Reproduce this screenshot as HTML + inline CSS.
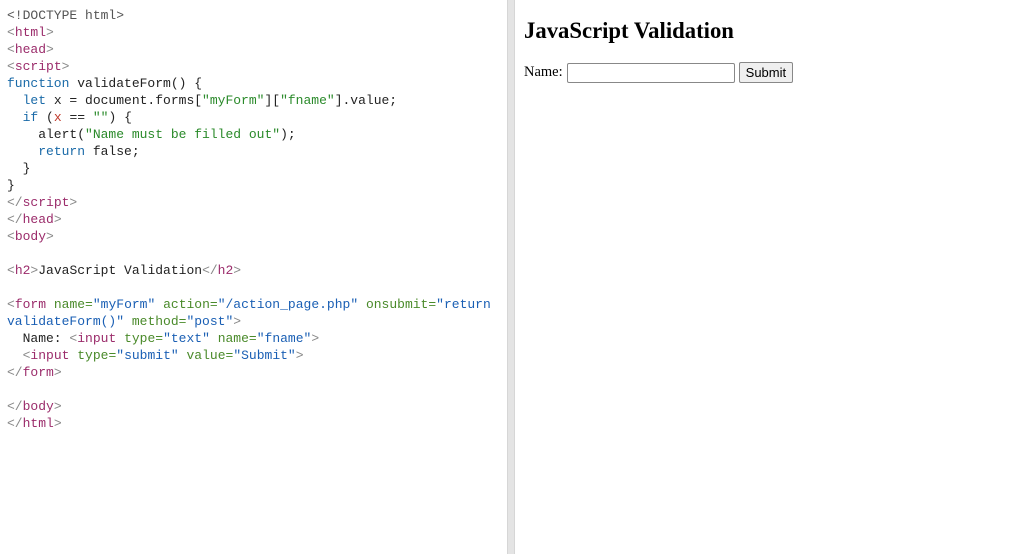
<!DOCTYPE html>
<html><head><style>
body{margin:0;width:1024px;height:554px;background:#fff;position:relative;overflow:hidden}
pre{position:absolute;left:7px;top:7px;margin:0;font-family:"Liberation Mono",monospace;font-size:13px;line-height:17px;color:#222}
.d{color:#555}.b{color:#888}.t{color:#9b2c6b}.k{color:#1a6aa8}.s{color:#2a8a2a}.a{color:#4a8a2a}.v{color:#1a5fb4}.r{color:#c0392b}
.div{position:absolute;left:507px;top:0;width:8px;height:554px;background:#e4e4e4;border-left:1px solid #d6d6d6;border-right:1px solid #d6d6d6;box-sizing:border-box}
.right{position:absolute;left:524px;top:0;font-family:"Liberation Serif",serif;color:#000}
h2{font-size:22.7px;margin:18px 0 0;font-weight:bold}
.f{position:absolute;top:62px;left:0;white-space:nowrap;font-size:14.5px;display:flex;align-items:center}
.in{width:166px;height:18px;border:1px solid #888;border-radius:2px;margin-left:4px}
.btn{margin-left:4px;font-family:"Liberation Sans",sans-serif;font-size:13px;padding:1px 6px;border:1px solid #888;background:#efefef;border-radius:2px;height:17px;line-height:17px}
</style></head><body>
<pre><span class="d">&lt;!DOCTYPE html&gt;</span>
<span class="b">&lt;</span><span class="t">html</span><span class="b">&gt;</span>
<span class="b">&lt;</span><span class="t">head</span><span class="b">&gt;</span>
<span class="b">&lt;</span><span class="t">script</span><span class="b">&gt;</span>
<span class="k">function</span> validateForm() {
  <span class="k">let</span> x = document.forms[<span class="s">"myForm"</span>][<span class="s">"fname"</span>].value;
  <span class="k">if</span> (<span class="r">x</span> == <span class="s">""</span>) {
    alert(<span class="s">"Name must be filled out"</span>);
    <span class="k">return</span> false;
  }
}
<span class="b">&lt;/</span><span class="t">script</span><span class="b">&gt;</span>
<span class="b">&lt;/</span><span class="t">head</span><span class="b">&gt;</span>
<span class="b">&lt;</span><span class="t">body</span><span class="b">&gt;</span>

<span class="b">&lt;</span><span class="t">h2</span><span class="b">&gt;</span>JavaScript Validation<span class="b">&lt;/</span><span class="t">h2</span><span class="b">&gt;</span>

<span class="b">&lt;</span><span class="t">form</span> <span class="a">name=</span><span class="v">"myForm"</span> <span class="a">action=</span><span class="v">"/action_page.php"</span> <span class="a">onsubmit=</span><span class="v">"return</span>
<span class="v">validateForm()"</span> <span class="a">method=</span><span class="v">"post"</span><span class="b">&gt;</span>
  Name: <span class="b">&lt;</span><span class="t">input</span> <span class="a">type=</span><span class="v">"text"</span> <span class="a">name=</span><span class="v">"fname"</span><span class="b">&gt;</span>
  <span class="b">&lt;</span><span class="t">input</span> <span class="a">type=</span><span class="v">"submit"</span> <span class="a">value=</span><span class="v">"Submit"</span><span class="b">&gt;</span>
<span class="b">&lt;/</span><span class="t">form</span><span class="b">&gt;</span>

<span class="b">&lt;/</span><span class="t">body</span><span class="b">&gt;</span>
<span class="b">&lt;/</span><span class="t">html</span><span class="b">&gt;</span></pre>
<div class="div"></div>
<div class="right">
<h2>JavaScript Validation</h2>
<div class="f">Name:<span class="in"></span><span class="btn">Submit</span></div>
</div>
</body></html>
